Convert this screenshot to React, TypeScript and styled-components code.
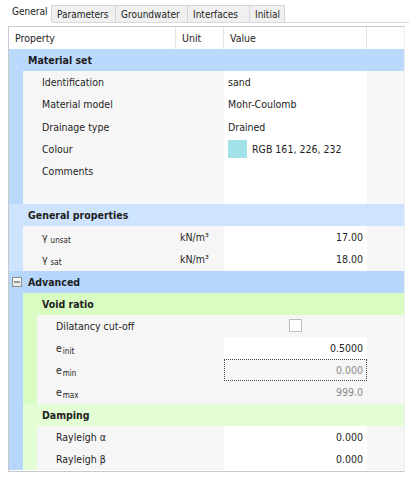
import React from 'react';
import styled, { createGlobalStyle } from 'styled-components';

const RH = 22.16;

const Global = createGlobalStyle`
  html, body { margin: 0; padding: 0; background: #ffffff; }
  body {
    font-family: "DejaVu Sans Condensed", "DejaVu Sans", "Liberation Sans", sans-serif;
    color: #1e1e1e;
  }
`;

const Page = styled.div`
  width: 409px;
  height: 480px;
  overflow: hidden;
  box-sizing: border-box;
  padding: 3px 0 0 8px;
  display: flex;
  flex-direction: column;
`;

const TabStrip = styled.div`
  display: flex;
  align-items: flex-end;
  height: 19px;
  border-bottom: 1px solid #d9d9d9;
`;

const Tab = styled.div<{ $active?: boolean; $w: number }>`
  box-sizing: border-box;
  width: ${(p) => p.$w}px;
  font-size: 10px;
  white-space: nowrap;
  color: #1e1e1e;
  ${(p) =>
    p.$active
      ? `
    height: 20px;
    line-height: 18px;
    padding-left: 4px;
    background: #ffffff;
    margin-bottom: -1px;
  `
      : `
    height: 17px;
    line-height: 17px;
    padding-left: 5px;
    background: #f0f0f0;
    border: 1px solid #d6d6d6;
    border-bottom: none;
    margin-left: -1px;
  `}
`;

const Panel = styled.div`
  margin-top: 3px;
  width: 397px;
  box-sizing: border-box;
  border: 1px solid #c9c9c9;
  border-right-color: #eeeeee;
  padding-bottom: 1px;
  display: flex;
  flex-direction: column;
`;

const COLS = '167px 48px 143px 1fr';

const HeaderRow = styled.div`
  display: grid;
  grid-template-columns: ${COLS};
  height: 22px;
  background: #ffffff;
  font-size: 10.5px;
`;

const HeaderCell = styled.div`
  border-right: 1px solid #e4e4e4;
  padding-left: 6px;
  line-height: 22px;
  &:last-child { border-right: none; }
`;

const GroupRow = styled.div`
  display: flex;
  height: ${RH}px;
`;

const GroupLabel = styled.div<{ $bg: string; $icon?: boolean }>`
  flex: 1;
  display: flex;
  align-items: center;
  background: ${(p) => p.$bg};
  padding-left: ${(p) => (p.$icon ? 3 : 19)}px;
  font-size: 10.5px;
  font-weight: bold;
`;

const Gutter = styled.div<{ $bg: string }>`
  flex: 0 0 14px;
  background: ${(p) => p.$bg};
`;

const LeafRow = styled.div<{ $span?: number }>`
  display: grid;
  grid-template-columns: ${COLS};
  height: ${(p) => RH * (p.$span ?? 1)}px;
  background: #f6f6f6;
  font-size: 10.5px;
`;

const PropCell = styled.div`
  display: flex;
  min-width: 0;
`;

const Label = styled.div`
  flex: 1;
  padding-left: 19px;
  height: ${RH}px;
  display: flex;
  align-items: center;
  white-space: nowrap;
`;

const UnitCell = styled.div`
  padding-left: 4px;
  height: ${RH}px;
  display: flex;
  align-items: center;
  white-space: nowrap;
`;

const ValueCell = styled.div<{ $white?: boolean; $focus?: boolean; $align?: 'left' | 'right' | 'center'; $muted?: boolean }>`
  box-sizing: border-box;
  background: ${(p) => (p.$white ? '#ffffff' : 'transparent')};
  border: 1px ${(p) => (p.$focus ? 'dotted #4a4a4a' : 'solid transparent')};
  display: flex;
  align-items: ${(p) => (p.$align === 'left' ? 'flex-start' : 'center')};
  justify-content: ${(p) =>
    p.$align === 'right' ? 'flex-end' : p.$align === 'center' ? 'center' : 'flex-start'};
  padding: 0 3px 0 3px;
  color: ${(p) => (p.$muted ? '#8a8a8a' : '#1e1e1e')};
  white-space: nowrap;
`;

const ValueLine = styled.div`
  height: ${RH - 2}px;
  display: flex;
  align-items: center;
`;

const Swatch = styled.span<{ $color: string }>`
  display: inline-block;
  width: 19px;
  height: 18px;
  background: ${(p) => p.$color};
  margin-right: 5px;
`;

const Checkbox = styled.span`
  display: inline-block;
  box-sizing: border-box;
  width: 13px;
  height: 13px;
  border: 1px solid #bdbdbd;
  background: #ffffff;
`;

const Sub = styled.span<{ $gap: number }>`
  font-size: 8px;
  position: relative;
  top: 3px;
  margin-left: ${(p) => p.$gap}px;
`;

const Filler = styled.div``;

const ExpandBox = () => (
  <svg width="10" height="10" viewBox="0 0 10 10" style={{ marginRight: 6, flex: '0 0 auto' }}>
    <defs>
      <linearGradient id="eb" x1="0" y1="0" x2="0" y2="1">
        <stop offset="0" stopColor="#ffffff" />
        <stop offset="1" stopColor="#e4e4e4" />
      </linearGradient>
    </defs>
    <rect x="0.5" y="0.5" width="9" height="9" fill="url(#eb)" stroke="#8f8f8f" />
    <rect x="2" y="4.5" width="6" height="1" fill="#3c3c3c" />
  </svg>
);

const C = {
  matSet: '#bad9fd',
  genProp: '#cee3fd',
  adv: '#b6d6fb',
  void: '#d9fcc3',
  damp: '#e3fdd4',
};

type Val = {
  text?: React.ReactNode;
  white?: boolean;
  focus?: boolean;
  align?: 'left' | 'right' | 'center';
  muted?: boolean;
};

const Leaf = ({
  gutters,
  label,
  unit,
  value,
  span,
}: {
  gutters: string[];
  label: React.ReactNode;
  unit?: React.ReactNode;
  value: Val;
  span?: number;
}) => (
  <LeafRow $span={span}>
    <PropCell>
      {gutters.map((g, i) => (
        <Gutter key={i} $bg={g} />
      ))}
      <Label>{label}</Label>
    </PropCell>
    <UnitCell>{unit}</UnitCell>
    <ValueCell $white={value.white} $focus={value.focus} $align={value.align} $muted={value.muted}>
      <ValueLine>{value.text}</ValueLine>
    </ValueCell>
    <Filler />
  </LeafRow>
);

const Group = ({
  gutters,
  bg,
  label,
  icon,
}: {
  gutters: string[];
  bg: string;
  label: string;
  icon?: boolean;
}) => (
  <GroupRow>
    {gutters.map((g, i) => (
      <Gutter key={i} $bg={g} />
    ))}
    <GroupLabel $bg={bg} $icon={icon}>
      {icon && <ExpandBox />}
      {label}
    </GroupLabel>
  </GroupRow>
);

export default function App() {
  const unit = 'kN/m³';
  return (
    <>
      <Global />
      <Page>
        <TabStrip>
          <Tab $active $w={44}>General</Tab>
          <Tab $w={65}>Parameters</Tab>
          <Tab $w={73}>Groundwater</Tab>
          <Tab $w={63}>Interfaces</Tab>
          <Tab $w={36}>Initial</Tab>
        </TabStrip>
        <Panel>
          <HeaderRow>
            <HeaderCell>Property</HeaderCell>
            <HeaderCell>Unit</HeaderCell>
            <HeaderCell>Value</HeaderCell>
            <HeaderCell />
          </HeaderRow>

          <Group gutters={[]} bg={C.matSet} label="Material set" />
          <Leaf gutters={[C.matSet]} label="Identification" value={{ text: 'sand', white: true }} />
          <Leaf gutters={[C.matSet]} label="Material model" value={{ text: 'Mohr-Coulomb', white: true }} />
          <Leaf gutters={[C.matSet]} label="Drainage type" value={{ text: 'Drained', white: true }} />
          <Leaf
            gutters={[C.matSet]}
            label="Colour"
            value={{
              text: (
                <>
                  <Swatch $color="rgb(161, 226, 232)" />
                  RGB 161, 226, 232
                </>
              ),
              white: true,
            }}
          />
          <Leaf gutters={[C.matSet]} label="Comments" value={{ text: '', white: true, align: 'left' }} span={2} />

          <Group gutters={[]} bg={C.genProp} label="General properties" />
          <Leaf
            gutters={[C.genProp]}
            label={
              <>
                γ<Sub $gap={3}>unsat</Sub>
              </>
            }
            unit={unit}
            value={{ text: '17.00', white: true, align: 'right' }}
          />
          <Leaf
            gutters={[C.genProp]}
            label={
              <>
                γ<Sub $gap={3}>sat</Sub>
              </>
            }
            unit={unit}
            value={{ text: '18.00', white: true, align: 'right' }}
          />

          <Group gutters={[]} bg={C.adv} label="Advanced" icon />
          <Group gutters={[C.adv]} bg={C.void} label="Void ratio" />
          <Leaf
            gutters={[C.adv, C.void]}
            label="Dilatancy cut-off"
            value={{ text: <Checkbox />, align: 'center' }}
          />
          <Leaf
            gutters={[C.adv, C.void]}
            label={
              <>
                e<Sub $gap={1}>init</Sub>
              </>
            }
            value={{ text: '0.5000', white: true, align: 'right' }}
          />
          <Leaf
            gutters={[C.adv, C.void]}
            label={
              <>
                e<Sub $gap={1}>min</Sub>
              </>
            }
            value={{ text: '0.000', focus: true, align: 'right', muted: true }}
          />
          <Leaf
            gutters={[C.adv, C.void]}
            label={
              <>
                e<Sub $gap={1}>max</Sub>
              </>
            }
            value={{ text: '999.0', align: 'right', muted: true }}
          />
          <Group gutters={[C.adv]} bg={C.damp} label="Damping" />
          <Leaf gutters={[C.adv, C.damp]} label="Rayleigh α" value={{ text: '0.000', white: true, align: 'right' }} />
          <Leaf gutters={[C.adv, C.damp]} label="Rayleigh β" value={{ text: '0.000', white: true, align: 'right' }} />
        </Panel>
      </Page>
    </>
  );
}
